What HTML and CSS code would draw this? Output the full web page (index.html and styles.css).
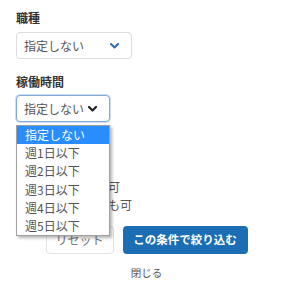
FILE: index.html
```html
<!DOCTYPE html>
<html lang="ja">
<head>
<meta charset="utf-8">
<link rel="stylesheet" href="styles.css">
</head>
<body>
<div class="panel">
  <div class="field">
    <div class="label">職種</div>
    <div class="select select-wide">
      <span class="select-text">指定しない</span>
      <svg class="chev chev-blue" width="9" height="6" viewBox="0 0 9 6"><polyline points="1,1 4.5,4.5 8,1" fill="none" stroke="#2b6cb0" stroke-width="2" stroke-linecap="round" stroke-linejoin="round"/></svg>
    </div>
  </div>
  <div class="field field-2">
    <div class="label">稼働時間</div>
    <div class="select-wrap">
      <div class="select select-focus">
        <span class="select-text">指定しない</span>
        <svg class="chev" width="9" height="6" viewBox="0 0 9 6"><polyline points="1,1 4.5,4.5 8,1" fill="none" stroke="#222" stroke-width="2.2" stroke-linecap="round" stroke-linejoin="round"/></svg>
      </div>
      <ul class="menu">
        <li class="opt opt-active">指定しない</li>
        <li class="opt">週1日以下</li>
        <li class="opt">週2日以下</li>
        <li class="opt">週3日以下</li>
        <li class="opt">週4日以下</li>
        <li class="opt">週5日以下</li>
      </ul>
    </div>
  </div>
  <div class="field field-3">
    <div class="label">その他</div>
    <label class="check"><span class="box"></span><span>フルリモート可</span></label>
    <label class="check"><span class="box"></span><span>ダブルワークも可</span></label>
  </div>
  <div class="actions">
    <button class="btn btn-reset">リセット</button>
    <button class="btn btn-primary">この条件で絞り込む</button>
  </div>
  <div class="close">閉じる</div>
</div>
</body>
</html>
```
FILE: styles.css
```css
* { box-sizing: border-box; }
html, body { margin: 0; padding: 0; background: #fff; }
body {
  font-family: "Noto Sans CJK JP", "Noto Sans", sans-serif;
  font-size: 12px;
  color: #555;
}
.panel { padding: 9px 16px 0 16px; }
.label {
  font-weight: bold;
  color: #333;
  line-height: 18px;
  font-size: 12px;
}
.field .select { margin-top: 5px; }
.field-2 { margin-top: 14px; }
.field-2 .select { margin-top: 4px; }
.select {
  display: flex;
  align-items: center;
  justify-content: space-between;
  height: 27px;
  border: 1px solid #ddd;
  border-radius: 4px;
  padding: 0 12px 0 7px;
  background: #fff;
  color: #555;
  line-height: 1;
}
.select-wide { width: 116px; }
.select-wrap { position: relative; width: 94px; }
.select-focus {
  width: 94px;
  border-color: #80a9d8;
  box-shadow: 0 0 0 1px rgba(120,160,215,0.35);
  padding-right: 12px;
}
.chev { display: block; }
.menu {
  position: absolute;
  left: 0;
  top: 30px;
  width: 94px;
  margin: 0;
  padding: 0;
  list-style: none;
  background: #fff;
  border: 1px solid #a0a0a0;
  box-shadow: 2px 2px 3px rgba(0,0,0,0.3);
  z-index: 10;
}
.opt {
  height: 18.2px;
  line-height: 18px;
  padding-left: 8px;
  color: #555;
  white-space: nowrap;
}
.opt-active { background: #2a8dff; color: #fff; }
.field-3 { margin-top: 18px; }
.check {
  display: flex;
  align-items: center;
  gap: 7px;
  height: 18px;
  line-height: 18px;
}
.field-3 .label { margin-bottom: 20px; }
.box {
  width: 13px;
  height: 13px;
  border: 1px solid #888;
  border-radius: 2px;
  background: #fff;
}
.actions {
  display: flex;
  justify-content: center;
  gap: 9px;
  margin-top: 12px;
}
.btn {
  font-family: inherit;
  font-size: 12px;
  height: 28px;
  border-radius: 4px;
  padding: 0;
  cursor: pointer;
  line-height: 1;
}
.btn-reset {
  width: 68px;
  background: #fff;
  border: 1px solid #e3e3e3;
  color: #777;
}
.btn-primary {
  width: 125px;
  background: #1b6db4;
  border: none;
  color: #fff;
  font-weight: bold;
  font-size: 11.5px;
}
.close {
  text-align: center;
  margin-top: 10px;
  line-height: 18px;
  font-size: 10.5px;
  color: #555;
}
```
